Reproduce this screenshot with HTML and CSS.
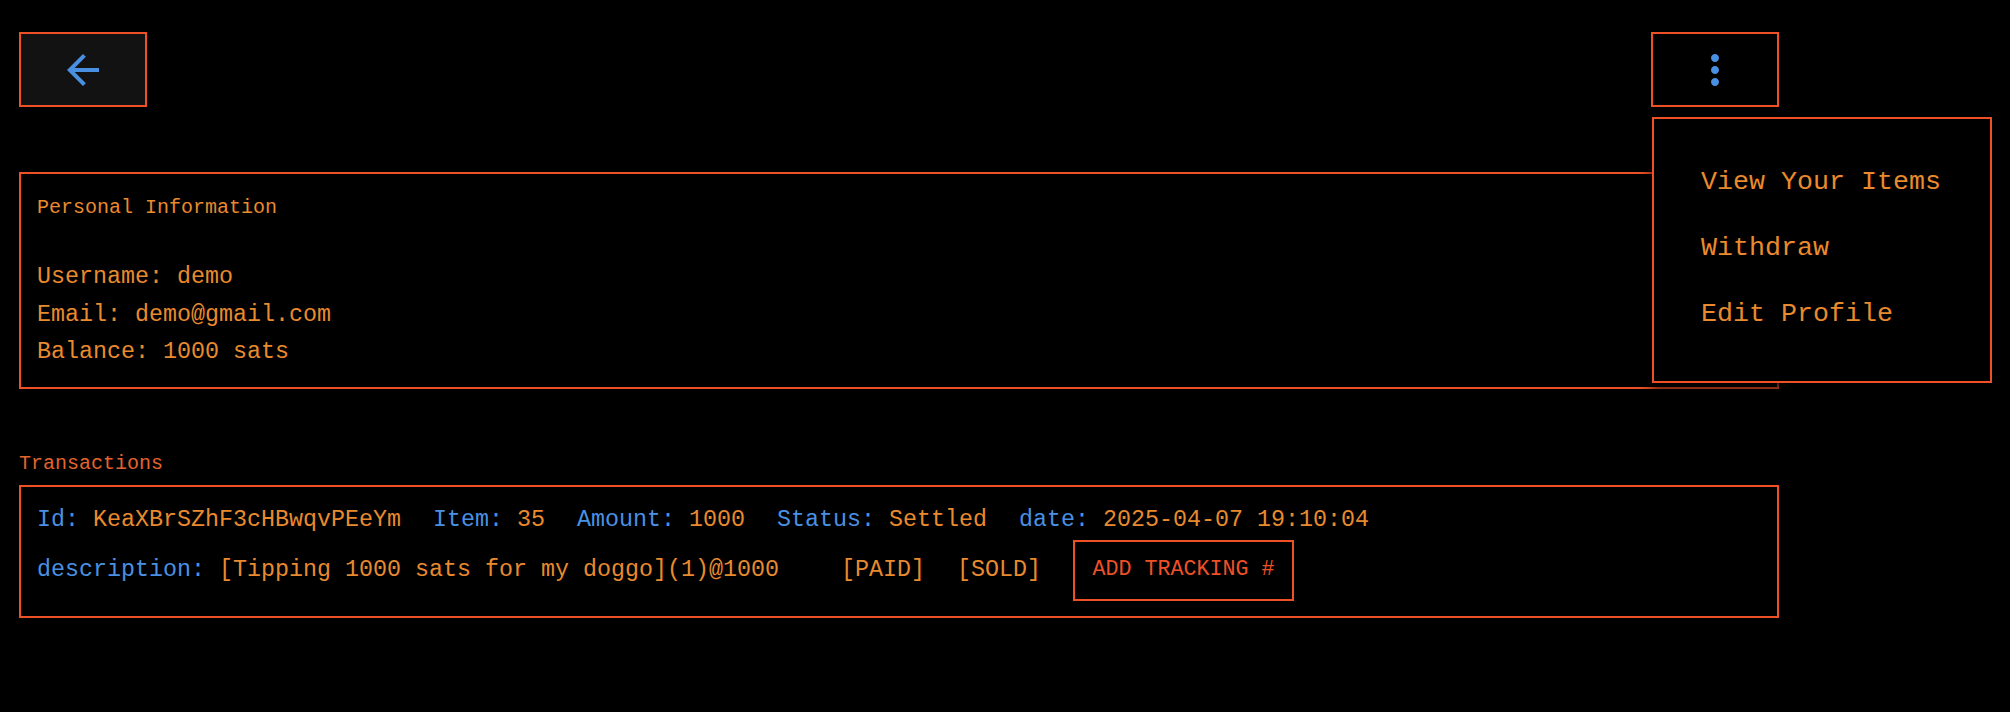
FILE: index.html
```html
<!DOCTYPE html>
<html lang="en">
<head>
<meta charset="utf-8">
<title>Profile</title>
<link rel="stylesheet" href="styles.css">
</head>
<body>
<div class="page">
  <div class="topbar">
    <button class="icon-btn back-btn" aria-label="Back">
      <svg viewBox="0 0 24 24" width="48" height="48"><path d="M20 11H7.83l5.59-5.59L12 4l-8 8 8 8 1.41-1.41L7.83 13H20v-2z"/></svg>
    </button>
    <div class="more-wrap">
      <button class="icon-btn more-btn" aria-label="More">
        <svg viewBox="0 0 24 24" width="48" height="48"><path d="M12 8c1.1 0 2-.9 2-2s-.9-2-2-2-2 .9-2 2 .9 2 2 2zm0 2c-1.1 0-2 .9-2 2s.9 2 2 2 2-.9 2-2-.9-2-2-2zm0 6c-1.1 0-2 .9-2 2s.9 2 2 2 2-.9 2-2-.9-2-2-2z"/></svg>
      </button>
      <ul class="menu">
        <li class="menu-item">View Your Items</li>
        <li class="menu-item">Withdraw</li>
        <li class="menu-item">Edit Profile</li>
      </ul>
    </div>
  </div>

  <section class="card info-card">
    <div class="card-title">Personal Information</div>
    <div class="info-line">Username: demo</div>
    <div class="info-line">Email: demo@gmail.com</div>
    <div class="info-line">Balance: 1000 sats</div>
  </section>

  <div class="section-label">Transactions</div>
  <section class="card tx-card">
    <div class="tx-row">
      <span><span class="k">Id:</span> KeaXBrSZhF3cHBwqvPEeYm</span>
      <span><span class="k">Item:</span> 35</span>
      <span><span class="k">Amount:</span> 1000</span>
      <span><span class="k">Status:</span> Settled</span>
      <span><span class="k">date:</span> 2025-04-07 19:10:04</span>
    </div>
    <div class="tx-row tx-row2">
      <span><span class="k">description:</span> [Tipping 1000 sats for my doggo](1)@1000</span>
      <span class="paid">[PAID]</span>
      <span>[SOLD]</span>
      <button class="track-btn">ADD TRACKING #</button>
    </div>
  </section>
</div>
</body>
</html>
```
FILE: styles.css
```css
html, body {
  margin: 0;
  padding: 0;
  background: #000;
}
body {
  font-family: "Liberation Mono", "DejaVu Sans Mono", monospace;
  color: #e98a2e;
  width: 2010px;
  height: 712px;
  overflow: hidden;
}
.page {
  width: 1760px;
  padding: 32px 0 0 19px;
}
.topbar {
  display: flex;
  justify-content: space-between;
  align-items: flex-start;
}
.icon-btn {
  box-sizing: border-box;
  width: 128px;
  height: 75px;
  border: 2px solid #ee5127;
  background: #000;
  padding: 0;
  margin: 0;
  display: flex;
  align-items: center;
  justify-content: center;
  cursor: pointer;
}
.icon-btn svg {
  fill: #4a90e2;
  display: block;
}
.back-btn {
  background: #121212;
}
.more-wrap {
  position: relative;
}
.menu {
  position: absolute;
  top: 85px;
  left: 1px;
  z-index: 5;
  box-sizing: border-box;
  width: 340px;
  margin: 0;
  padding: 30px 0 34px;
  list-style: none;
  background: #000;
  border: 2px solid #ee5127;
  box-shadow: 0 5px 5px -3px rgba(0,0,0,0.5), 0 8px 10px 1px rgba(0,0,0,0.35), 0 3px 14px 2px rgba(0,0,0,0.3);
}
.menu-item {
  height: 66px;
  line-height: 66px;
  padding-left: 47px;
  font-size: 26.667px;
  color: #e98a2e;
  white-space: nowrap;
}
.card {
  box-sizing: border-box;
  width: 1760px;
  border: 2px solid #ee5127;
  padding: 16px;
}
.info-card {
  margin-top: 65px;
  height: 217px;
  padding-top: 15px;
}
.card-title {
  font-size: 20px;
  line-height: 38px;
  margin-bottom: 32px;
  color: #e98a2e;
}
.info-line {
  font-size: 23.333px;
  line-height: 37.5px;
  color: #e98a2e;
}
.section-label {
  margin-top: 63px;
  font-size: 20px;
  line-height: 24px;
  color: #e2642e;
  margin-bottom: 9px;
}
.tx-card {
  height: 133px;
  padding: 16px 16px 15px;
}
.tx-row {
  display: flex;
  align-items: center;
  gap: 32px;
  font-size: 23.333px;
  line-height: 35px;
  white-space: pre;
  color: #e98a2e;
}
.tx-row2 {
  margin-top: 2px;
}
.k {
  color: #4a90e2;
}
.paid {
  margin-left: 30px;
}
.track-btn {
  box-sizing: border-box;
  height: 61px;
  margin: 0;
  padding: 0 17.5px 1px;
  border: 2px solid #ee5127;
  background: #000;
  color: #ee5127;
  font-family: "Liberation Mono", "DejaVu Sans Mono", monospace;
  font-size: 21.667px;
  line-height: 1;
  cursor: pointer;
}
```
